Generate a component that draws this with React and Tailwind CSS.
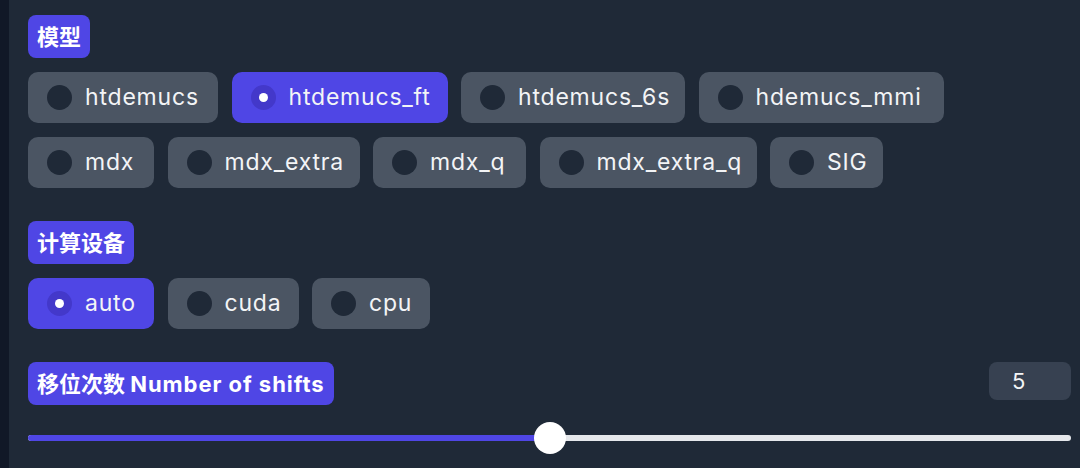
import React from "react";

const FONT = { fontFamily: 'Inter, "Noto Sans CJK SC", sans-serif' };

function Label({ children }) {
  return (
    <div className="flex">
      <div className="h-[43px] px-[9px] flex items-center rounded-[8px] bg-[#4f46e5] text-white font-bold text-[22px] leading-none whitespace-nowrap">
        <span>{children}</span>
      </div>
    </div>
  );
}

function Radio({ label, w, selected }) {
  return (
    <div
      className={
        "h-[51px] pl-[19px] flex items-center gap-[13px] rounded-[10px] shrink-0 " +
        (selected ? "bg-[#4f46e5]" : "bg-[#4b5563]")
      }
      style={{ width: w }}
    >
      {selected ? (
        <div className="w-[25px] h-[25px] shrink-0 rounded-full bg-[#4338ca] flex items-center justify-center">
          <div className="w-[9px] h-[9px] rounded-full bg-white" />
        </div>
      ) : (
        <div className="w-[25px] h-[25px] shrink-0 rounded-full bg-[#1f2937]" />
      )}
      <span className="text-[23px] tracking-[0.8px] text-[#f3f4f6] leading-none whitespace-nowrap">{label}</span>
    </div>
  );
}

export default function App() {
  const row1 = [
    ["htdemucs", 190, false],
    ["htdemucs_ft", 216, true],
    ["htdemucs_6s", 224, false],
    ["hdemucs_mmi", 245, false],
  ];
  const row2 = [
    ["mdx", 126, false],
    ["mdx_extra", 192, false],
    ["mdx_q", 153, false],
    ["mdx_extra_q", 217, false],
    ["SIG", 113, false],
  ];
  const row3 = [
    ["auto", 126, true],
    ["cuda", 131, false],
    ["cpu", 118, false],
  ];
  return (
    <div className="flex w-[1080px] h-[468px] overflow-hidden" style={FONT}>
      <div className="w-[9px] shrink-0 bg-[#111827]" />
      <div className="flex-1 bg-[#1f2937] pl-[19px] pr-[9px] pt-[15px] flex flex-col">
        <Label>模型</Label>
        <div className="mt-[14px] flex flex-col gap-[14px]">
          <div className="flex gap-[13.5px]">
            {row1.map(([l, w, s]) => (
              <Radio key={l} label={l} w={w} selected={s} />
            ))}
          </div>
          <div className="flex gap-[13.5px]">
            {row2.map(([l, w, s]) => (
              <Radio key={l} label={l} w={w} selected={s} />
            ))}
          </div>
        </div>

        <div className="mt-[33px]">
          <Label>计算设备</Label>
        </div>
        <div className="mt-[14px] flex gap-[13.5px]">
          {row3.map(([l, w, s]) => (
            <Radio key={l} label={l} w={w} selected={s} />
          ))}
        </div>

        <div className="mt-[33px] flex justify-between items-start">
          <Label>
            移位次数 <span className="tracking-[0.95px]">Number of shifts</span>
          </Label>
          <div className="w-[82px] h-[38px] rounded-[8px] bg-[#374151] pl-[23px] flex items-center text-[22px] text-[#f3f4f6]">
            5
          </div>
        </div>

        <div className="mt-[17px] relative h-[32px] flex items-center">
          <div className="w-full h-[6px] rounded-full bg-[#e5e7eb] overflow-hidden">
            <div className="w-1/2 h-full bg-[#4f46e5]" />
          </div>
          <div className="absolute left-1/2 top-0 -translate-x-1/2 w-[32px] h-[32px] rounded-full bg-white" />
        </div>
      </div>
    </div>
  );
}
